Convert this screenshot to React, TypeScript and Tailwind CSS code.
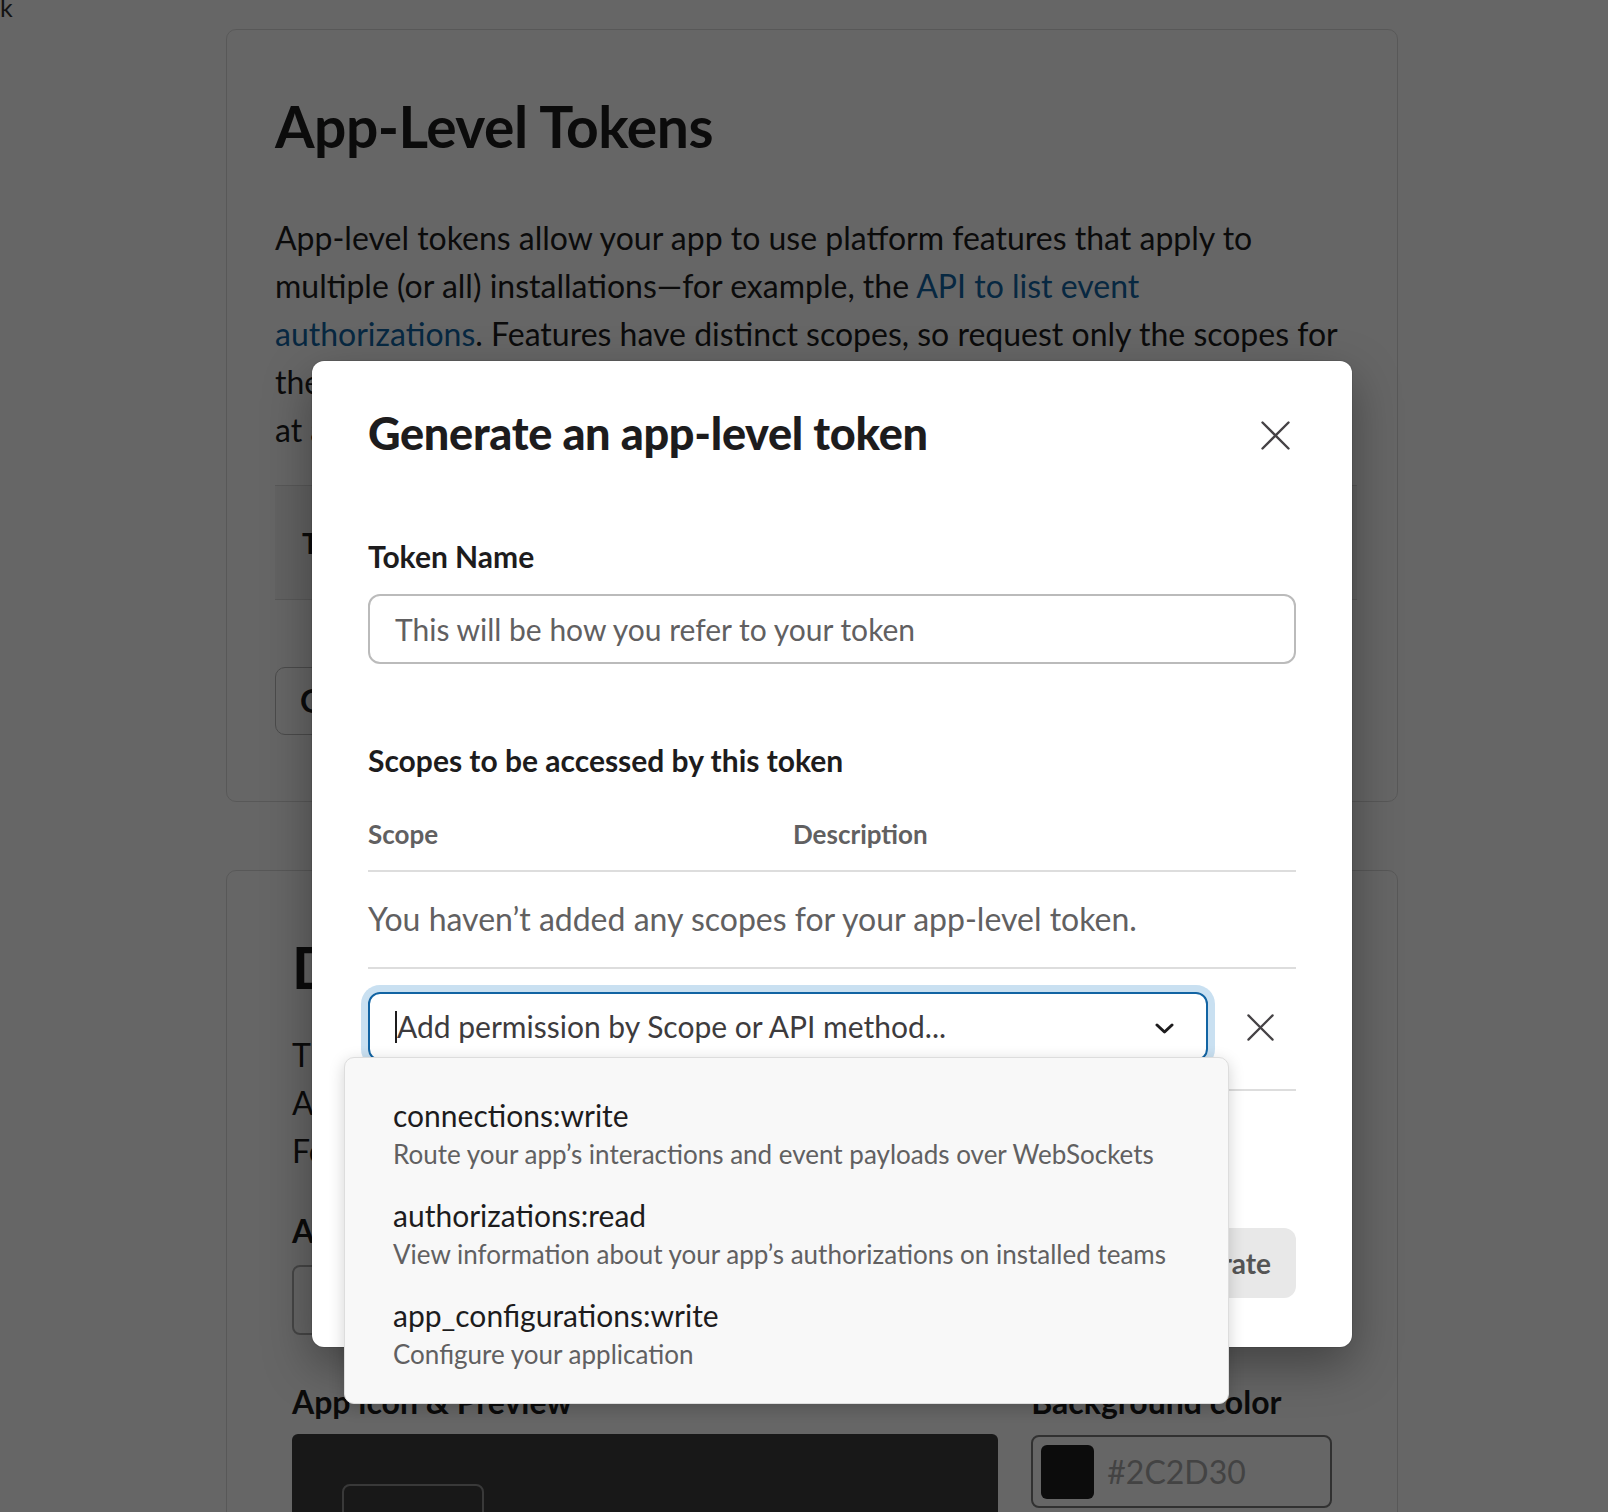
import React from 'react'

interface ScopeOption {
  name: string
  description: string
}

const scopeOptions: ScopeOption[] = [
  { name: 'connections:write', description: 'Route your app’s interactions and event payloads over WebSockets' },
  { name: 'authorizations:read', description: 'View information about your app’s authorizations on installed teams' },
  { name: 'app_configurations:write', description: 'Configure your application' },
]

function CloseIcon({ size = 29 }: { size?: number }) {
  return (
    <svg width={size} height={size} viewBox="0 0 29 29" fill="none">
      <path d="M1.5 1.5 L27.5 27.5 M27.5 1.5 L1.5 27.5" stroke="#454245" strokeWidth="2.4" strokeLinecap="round" />
    </svg>
  )
}

function TokenModal() {
  return (
    <div className="absolute left-[312px] top-[361px] w-[1040px] rounded-[12px] bg-white px-[56px] pt-[44px] pb-[49px] shadow-[0_0_0_1px_rgba(0,0,0,0.08),0_18px_48px_rgba(0,0,0,0.35)]">
      {/* Header */}
      <div className="flex items-center justify-between">
        <h2 className="text-[45px] leading-[56px] font-black tracking-[-0.3px] text-[#1d1c1d]">Generate an app-level token</h2>
        <button className="mr-[6px] mt-[4px]">
          <CloseIcon />
        </button>
      </div>

      {/* Token name */}
      <div className="mt-[75px] text-[30px] leading-[40px] font-bold text-[#1d1c1d]">Token Name</div>
      <div className="mt-[18px] flex h-[70px] items-center rounded-[12px] border-2 border-[#bbbbbb] px-[25px] text-[30px] text-[#616061]">
        This will be how you refer to your token
      </div>

      {/* Scopes */}
      <div className="mt-[76px] text-[30px] leading-[40px] font-bold text-[#1d1c1d]">Scopes to be accessed by this token</div>
      <div className="mt-[38px] flex border-b-2 border-[#dddddd] pb-[20px] text-[26px] leading-[32px] font-bold text-[#616061]">
        <span className="w-[425px]">Scope</span>
        <span>Description</span>
      </div>
      <div className="border-b-2 border-[#dddddd] pt-[27px] pb-[28px] text-[32px] leading-[40px] text-[#616061]">
        You haven’t added any scopes for your app-level token.
      </div>

      {/* Scope picker */}
      <div className="border-b-2 border-[#dddddd] pt-[23px] pb-[28px]">
        <div className="flex items-center">
          <div className="relative w-[840px]">
            <div className="flex h-[69px] items-center rounded-[12px] border-2 border-[#1264a3] pl-[25px] pr-[32px] shadow-[0_0_0_7px_#c9e0f1]">
              <span className="h-[32px] w-[2px] bg-[#1d1c1d]" />
              <span className="flex-1 text-[30px] text-[#3d3b3d]">Add permission by Scope or API method...</span>
              <svg width="19" height="11" viewBox="0 0 19 11" fill="none" className="mt-[3px]">
                <path d="M2 2 L9.5 9 L17 2" stroke="#1d1c1d" strokeWidth="3" strokeLinecap="round" strokeLinejoin="round" />
              </svg>
            </div>

            {/* Dropdown */}
            <div className="absolute left-[-24px] top-[65px] z-10 w-[885px] rounded-[10px] border border-[#dddddd] bg-[#f8f8f8] pt-[27px] pb-[18px] shadow-[0_4px_16px_rgba(0,0,0,0.18)]">
              {scopeOptions.map((opt) => (
                <div key={opt.name} className="px-[48px] py-[11px]">
                  <div className="text-[30px] leading-[39px] text-[#1d1c1d]">{opt.name}</div>
                  <div className="text-[26px] leading-[39px] text-[#616061]">{opt.description}</div>
                </div>
              ))}
            </div>
          </div>
          <button className="ml-[39px] mt-[2px]">
            <CloseIcon size={27} />
          </button>
        </div>
      </div>

      {/* Footer */}
      <div className="mt-[137px] flex justify-end">
        <button className="h-[70px] rounded-[12px] bg-[#e8e8e8] px-[25px] text-[28px] font-bold text-[#555555]">Generate</button>
      </div>
    </div>
  )
}

export default function App() {
  return (
    <div className="relative h-[1512px] overflow-hidden bg-white font-[Lato,sans-serif] text-[#1d1c1d]">
      <div className="h-[29px] text-[25px] leading-[14px] text-[#333333]">k</div>

      <div className="ml-[226px] w-[1172px]">
        {/* App-Level Tokens card */}
        <section className="rounded-[10px] border border-[#dddddd] pl-[48px] pr-[40px] pt-[64px] pb-[66px]">
          <h1 className="text-[57px] leading-[64px] font-bold tracking-[-0.5px]">App-Level Tokens</h1>
          <p className="mt-[56px] whitespace-nowrap text-[32px] leading-[48px]">
            App-level tokens allow your app to use platform features that apply to
            <br />
            multiple (or all) installations—for example, the <span className="text-[#1264a3]">API to list event</span>
            <br />
            <span className="text-[#1264a3]">authorizations</span>. Features have distinct scopes, so request only the scopes for
            <br />
            the features your app needs. Tokens are shown after you generate them,
            <br />
            at any time in this section.
          </p>
          <div className="mt-[31px] flex h-[115px] items-center border-y border-[#dddddd] bg-[#f6f6f6] px-[27px] text-[28px] font-bold">
            Token Name
          </div>
          <button className="mt-[67px] h-[68px] rounded-[10px] border border-[#bbbbbb] px-[24px] text-[32px] font-bold">
            Generate Token and Scopes
          </button>
        </section>

        {/* Display Information card */}
        <section className="mt-[68px] rounded-[10px] border border-[#dddddd] pl-[65px] pr-[65px] pt-[64px] pb-[40px]">
          <h1 className="text-[57px] leading-[64px] font-bold tracking-[-0.5px]">Display Information</h1>
          <p className="mt-[32px] whitespace-nowrap text-[32px] leading-[48px]">
            This information will be shown to people in Slack.
            <br />
            App name, description and icon help people find your app.
            <br />
            For tips, read about how to build a great app.
          </p>
          <div className="mt-[36px] text-[32px] leading-[40px] font-bold">App name</div>
          <div className="mt-[14px] h-[70px] w-[707px] rounded-[8px] border-2 border-[#b0b0b0]" />
          <div className="mt-[47px] flex gap-[33px]">
            <div className="w-[707px]">
              <div className="text-[32px] leading-[40px] font-bold">App icon &amp; Preview</div>
              <div className="mt-[12px] h-[320px] rounded-[6px] bg-[#3c3c3c] pl-[50px] pt-[50px]">
                <div className="h-[142px] w-[142px] rounded-[8px] border-2 border-[#8f8f8f]" />
              </div>
            </div>
            <div className="w-[301px]">
              <div className="text-[32px] leading-[40px] font-bold">Background color</div>
              <div className="mt-[13px] flex h-[73px] items-center gap-[13px] rounded-[8px] border-2 border-[#7a7a7a] pl-[8px]">
                <div className="h-[54px] w-[53px] rounded-[6px] bg-[#1e1e20]" />
                <span className="text-[32px] text-[#a8a8a8]">#2C2D30</span>
              </div>
            </div>
          </div>
        </section>
      </div>

      {/* Dim overlay */}
      <div className="absolute inset-0 bg-black/60" />

      <TokenModal />
    </div>
  )
}
